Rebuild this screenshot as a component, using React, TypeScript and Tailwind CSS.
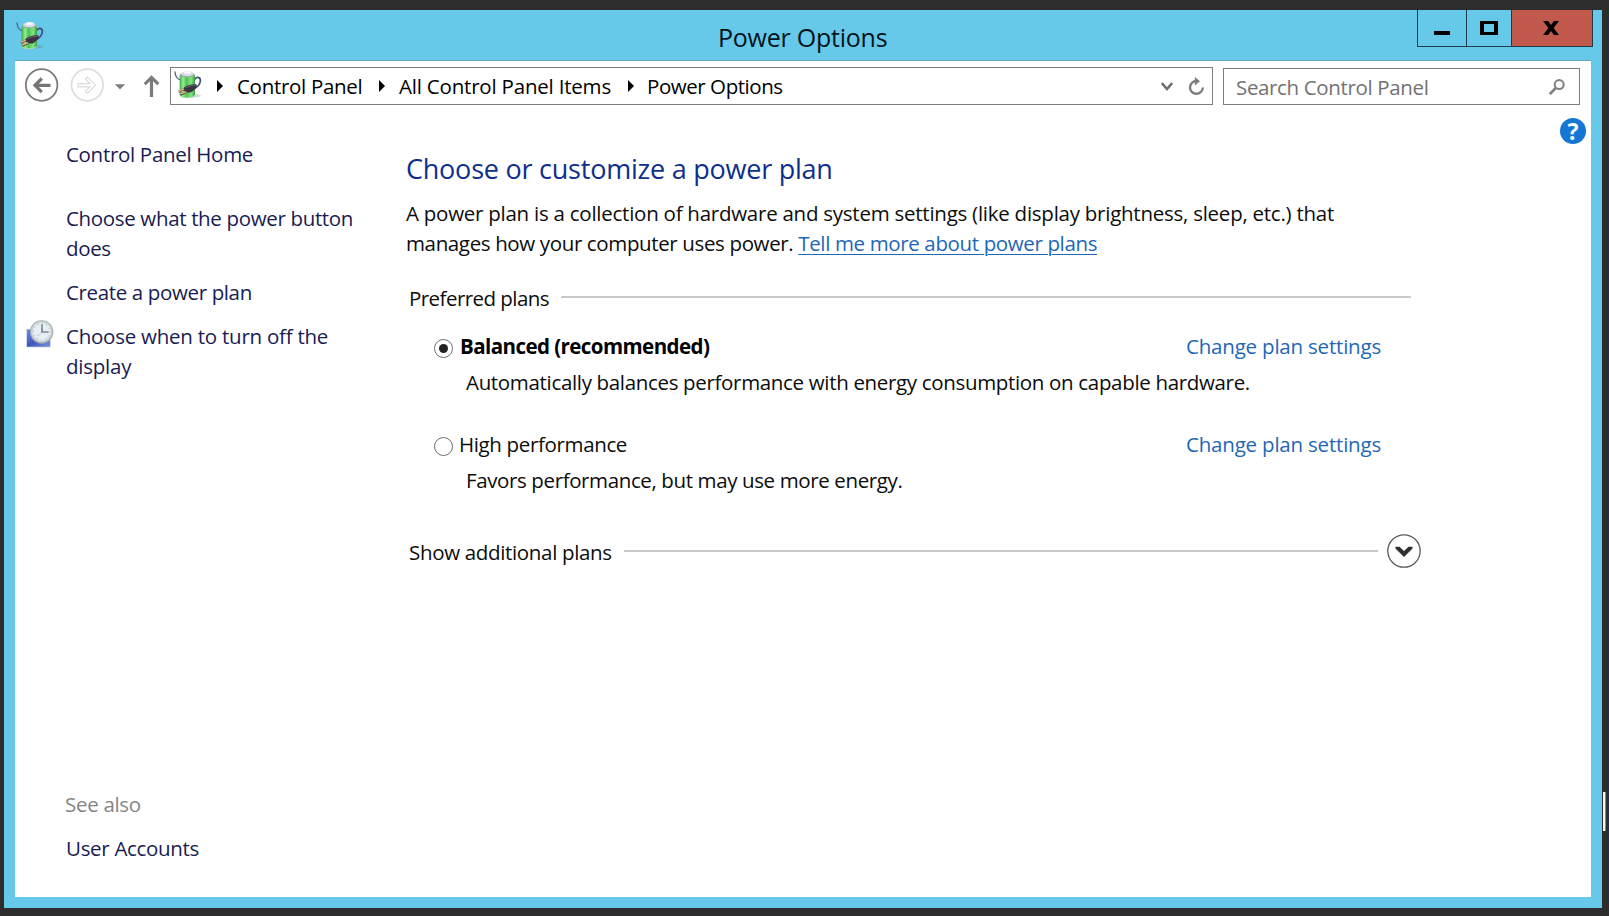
import type { ReactNode } from "react";

function PowerIcon() {
  return (
    <svg viewBox="0 0 90 90" className="h-[30px] w-[30px] shrink-0">
      <defs>
        <linearGradient id="battery" x1="0" x2="1" y1="0" y2="0">
          <stop offset="0" stopColor="#3aa845" />
          <stop offset="0.22" stopColor="#98ee92" />
          <stop offset="0.45" stopColor="#4cc253" />
          <stop offset="0.75" stopColor="#86e682" />
          <stop offset="1" stopColor="#349a40" />
        </linearGradient>
      </defs>
      <ellipse cx="52" cy="80" rx="29" ry="6" fill="#3f6b5a" opacity="0.25" />
      <path d="M3 9 C4 20 9 29 17 32" fill="none" stroke="#56628f" strokeWidth="4" strokeLinecap="round" />
      <path d="M63 30 C70 22 80 25 79 36 C78 46 72 52 64 57" fill="none" stroke="#414a78" strokeWidth="5" strokeLinecap="round" />
      <path d="M17 18 V79 C24 89 56 89 63 79 V18 Z" fill="url(#battery)" />
      <path d="M17 77 C24 87 56 87 63 77 V80 C56 90 24 90 17 80 Z" fill="#a9d8a4" />
      <ellipse cx="40" cy="18" rx="23" ry="7" fill="#8fb5a0" />
      <ellipse cx="40" cy="14" rx="18" ry="7.5" fill="#d9dcea" />
      <ellipse cx="41" cy="11" rx="11" ry="4" fill="#f7f7fc" />
      <path d="M27 61 C30 51 48 46 66 46 C72 49 66 60 54 68 C44 73 32 71 27 61 Z" fill="#3a3440" />
      <path d="M35 57 C44 51 54 49 64 49" fill="none" stroke="#6c6672" strokeWidth="3" />
      <path d="M30 61 L14 68 M36 69 L20 77" stroke="#6b4a3c" strokeWidth="6.5" />
      <path d="M30 60 L14 67 M36 68 L20 75" stroke="#e3bd93" strokeWidth="4" />
    </svg>
  );
}

function ClockIcon() {
  return (
    <svg viewBox="0 0 84 84" className="-mt-px h-7 w-7 shrink-0">
      <defs>
        <linearGradient id="screen" x1="0" x2="1" y1="0" y2="1">
          <stop offset="0" stopColor="#7189dc" />
          <stop offset="0.5" stopColor="#3f57bd" />
          <stop offset="1" stopColor="#7c90e0" />
        </linearGradient>
      </defs>
      <rect x="1" y="27" width="73" height="55" fill="#b9c4ea" />
      <rect x="3" y="29" width="69" height="51" fill="url(#screen)" />
      <circle cx="47" cy="36" r="35" fill="#9fa9ac" />
      <circle cx="47" cy="35" r="32" fill="#cbd3d4" />
      <circle cx="47" cy="35" r="27" fill="#e6eff4" />
      <circle cx="47" cy="35" r="24" fill="none" stroke="#7d8f9b" strokeWidth="3" strokeDasharray="2 10.56" />
      <path d="M48 13 V36 H68" fill="none" stroke="#4b5a66" strokeWidth="3.4" />
      <path d="M48 36 L33 49" stroke="#a5b0b8" strokeWidth="2" />
    </svg>
  );
}

function Crumb() {
  return (
    <svg viewBox="0 0 6 12" className="h-3 w-1.5 shrink-0">
      <path d="M0 0 L6 6 L0 12 Z" fill="#000" />
    </svg>
  );
}

function TitleBar() {
  return (
    <div className="flex h-[50px] shrink-0 items-start">
      <div className="w-[312px] pt-[10px] pl-3">
        <PowerIcon />
      </div>
      <div className="flex-1 pt-[9px] pl-[402px] text-[25px] leading-9 tracking-[-0.24px] whitespace-nowrap text-[#06141b]">
        Power Options
      </div>
      <div className="mr-[9px] flex h-[37px] border-b border-l border-[#1d3b48]">
        <div className="flex w-[49px] justify-center border-r border-[#1d3b48] pt-[21px]">
          <div className="h-1 w-4 bg-black" />
        </div>
        <div className="flex w-[45px] justify-center border-r border-[#1d3b48] pt-[11px]">
          <div className="h-[14px] w-[18px] border-x-4 border-y-[3px] border-black" />
        </div>
        <div className="flex w-[81px] justify-center border-r border-[#1d3b48] bg-[#c1594d] pt-[11px]">
          <svg viewBox="0 0 16 14" className="mr-0.5 h-[14px] w-4">
            <path d="M0 0 H5 L8 4 L11 0 H16 L10.6 7 L16 14 H11 L8 10 L5 14 H0 L5.4 7 Z" fill="#000" />
          </svg>
        </div>
      </div>
    </div>
  );
}

function Toolbar() {
  return (
    <div className="flex h-[50px] shrink-0 items-start pt-1.5 pl-[10px] text-[20.5px] leading-[30px] whitespace-nowrap">
      <svg viewBox="0 0 34 34" className="mt-px h-[34px] w-[34px] shrink-0">
        <circle cx="16.6" cy="17" r="15.8" fill="none" stroke="#7b7b7b" strokeWidth="1.8" />
        <path d="M25.5 17.3 H11 M16.8 10.5 L10 17.3 L16.8 24.1" fill="none" stroke="#757575" strokeWidth="3.2" />
      </svg>
      <svg viewBox="0 0 34 34" className="mt-px ml-[11px] h-[34px] w-[34px] shrink-0">
        <circle cx="17.3" cy="17" r="15.8" fill="none" stroke="#dedede" strokeWidth="1.8" />
        <path d="M8 15.6 H20 L15.5 11 L17.5 9 L25.5 17.2 L17.5 25.5 L15.5 23.4 L20 18.9 H8 Z" fill="none" stroke="#dcdcdc" strokeWidth="1.2" />
      </svg>
      <svg viewBox="0 0 10 6" className="mt-[17px] ml-[11px] h-1.5 w-[10px] shrink-0">
        <path d="M0 0.3 H10 L5 5.6 Z" fill="#7d7d7d" />
      </svg>
      <svg viewBox="0 0 16 22" className="mt-2 ml-[19px] h-[22px] w-4 shrink-0">
        <path d="M7.5 22 V2 M0.7 9.2 L7.5 2.4 L14.3 9.2" fill="none" stroke="#7b7b7b" strokeWidth="3.2" />
      </svg>
      <div className="ml-[10px] flex h-[38px] w-[1043px] shrink-0 items-center border border-[#7d7d7d] pl-[3px]">
        <div className="mb-1">
          <PowerIcon />
        </div>
        <div className="ml-[13px] flex">
          <Crumb />
        </div>
        <span className="ml-[14px] w-[126px] tracking-[-0.3px]">Control Panel</span>
        <div className="ml-4 flex">
          <Crumb />
        </div>
        <span className="ml-[14px] w-[214px] tracking-[-0.2px]">All Control Panel Items</span>
        <div className="ml-[15px] flex">
          <Crumb />
        </div>
        <span className="ml-[13px] flex-1 tracking-[-0.44px]">Power Options</span>
        <svg viewBox="0 0 12 9" className="mr-[15px] h-[9px] w-3 shrink-0">
          <path d="M0.8 1 L6 7 L11.2 1" fill="none" stroke="#707070" strokeWidth="2.6" />
        </svg>
        <svg viewBox="0 0 16 18" className="mr-2 h-[18px] w-4 shrink-0">
          <path d="M8.6 4 A6.4 6.4 0 1 0 14.8 10.4" fill="none" stroke="#7d7d7d" strokeWidth="2.4" />
          <path d="M6.8 0 L12 4.2 L6.8 8.4 Z" fill="#7d7d7d" />
        </svg>
      </div>
      <div className="mt-px ml-[10px] flex h-[37px] w-[357px] shrink-0 items-center border border-[#7d7d7d] pr-[14px] pl-3 text-[#727272]">
        <span className="flex-1 tracking-[-0.35px]">Search Control Panel</span>
        <svg viewBox="0 0 16 16" className="h-4 w-4 shrink-0">
          <circle cx="10.2" cy="5.6" r="4.5" fill="none" stroke="#808080" strokeWidth="2" />
          <path d="M6.8 9 L0.8 15" stroke="#808080" strokeWidth="2.6" />
        </svg>
      </div>
    </div>
  );
}

function Sidebar() {
  return (
    <div className="flex w-[391px] shrink-0 flex-col pt-7 pb-[34px] whitespace-nowrap text-[#191c52]">
      <div className="pl-[51px] tracking-[-0.31px]">Control Panel Home</div>
      <div className="mt-[34px] flex flex-col gap-[14px]">
        <div className="pl-[51px] tracking-[-0.34px]">
          Choose what the power button
          <br />
          does
        </div>
        <div className="pl-[51px] tracking-[-0.36px]">Create a power plan</div>
        <div className="flex tracking-[-0.24px]">
          <div className="w-[51px] pl-[11px]">
            <ClockIcon />
          </div>
          <div>
            Choose when to turn off the
            <br />
            display
          </div>
        </div>
      </div>
      <div className="mt-auto flex flex-col gap-[14px] pl-[51px]">
        <div className="-ml-px tracking-[-0.3px] text-[#858585]">See also</div>
        <div className="tracking-[-0.31px]">User Accounts</div>
      </div>
    </div>
  );
}

function Plan({ selected, name, children }: { selected?: boolean; name: ReactNode; children: ReactNode }) {
  return (
    <div className="pl-7">
      <div className="flex items-start">
        <div className="mt-2 mr-1.5 flex h-[19px] w-[19px] items-center justify-center rounded-full border border-[#6e6e6e]">
          {selected && <div className="h-[9px] w-[9px] rounded-full bg-[#222]" />}
        </div>
        <div className="flex-1">{name}</div>
        <div className="mr-[30px] tracking-[-0.2px] text-[#1f66b8]">Change plan settings</div>
      </div>
      <div className="mt-1.5 pl-8">{children}</div>
    </div>
  );
}

function Main() {
  return (
    <div className="w-[1005px] shrink-0 pt-[37px] whitespace-nowrap text-[#0c0c0c]">
      <h1 className="text-[27px] leading-[41px] tracking-[-0.23px] text-[#0e2f8c]">Choose or customize a power plan</h1>
      <div className="mt-[9px]">
        <span className="tracking-[-0.25px]">
          A power plan is a collection of hardware and system settings (like display brightness, sleep, etc.) that
        </span>
        <br />
        <span className="tracking-[-0.365px]">
          manages how your computer uses power.{" "}
          <span className="text-[#1f66b8] underline decoration-1 underline-offset-[3px]">Tell me more about power plans</span>
        </span>
      </div>
      <div className="mt-[25px] flex pl-[3px]">
        <span className="w-[152px] tracking-[-0.55px]">Preferred plans</span>
        <div className="mt-[13px] h-0.5 flex-1 bg-[#c9c9c9]" />
      </div>
      <div className="mt-[18px]">
        <Plan selected name={<b className="ml-px font-bold tracking-[-0.56px] text-black">Balanced (recommended)</b>}>
          <span className="tracking-[-0.33px]">Automatically balances performance with energy consumption on capable hardware.</span>
        </Plan>
      </div>
      <div className="mt-8">
        <Plan name={<span className="tracking-[-0.35px]">High performance</span>}>
          <span className="tracking-[-0.38px]">Favors performance, but may use more energy.</span>
        </Plan>
      </div>
      <div className="mt-[42px] -mr-[10px] flex pl-[3px]">
        <span className="w-[215px] tracking-[-0.33px]">Show additional plans</span>
        <div className="mt-[13px] h-0.5 flex-1 bg-[#c9c9c9]" />
        <svg viewBox="0 0 34 34" className="-mt-[3px] ml-[9px] h-[34px] w-[34px]">
          <circle cx="17" cy="17" r="16.2" fill="none" stroke="#5a5a5a" strokeWidth="1.3" />
          <path d="M8.5 12.8 L12.5 12.8 L17 17 L21.5 12.8 L25.5 12.8 L25.5 14.6 L17 23 L8.5 14.6 Z" fill="#303030" />
        </svg>
      </div>
    </div>
  );
}

export default function App() {
  return (
    <div className="relative h-[916px] w-[1609px] overflow-hidden bg-[#2d2d2d] pt-[10px] pl-1 font-['Open_Sans',sans-serif]">
      <div className="flex h-[898px] w-[1598px] flex-col bg-[#66c9ea] px-[11px] pb-[11px]">
        <div className="-mx-[11px]">
          <TitleBar />
        </div>
        <div className="flex flex-1 flex-col border-t border-[#68a9c2] bg-white">
          <Toolbar />
          <div className="flex flex-1 text-[20.5px] leading-[30px]">
            <Sidebar />
            <Main />
            <div className="ml-auto pt-[7px] pr-[5px]">
              <div className="flex h-[26px] w-[26px] items-center justify-center rounded-full bg-[#1577d3] text-[23px] leading-none font-bold text-white">
                ?
              </div>
            </div>
          </div>
        </div>
      </div>
      <div className="absolute top-[792px] left-[1603px] h-[39px] w-[3px] border-r border-[#8a8880] bg-[#f4f4ee]" />
    </div>
  );
}
